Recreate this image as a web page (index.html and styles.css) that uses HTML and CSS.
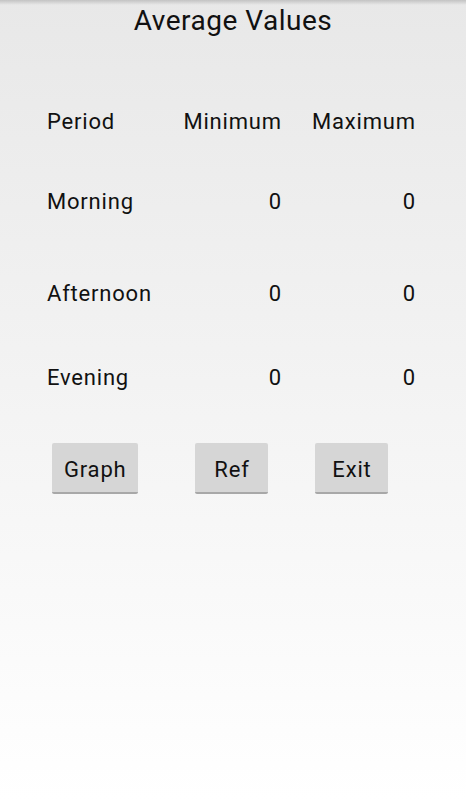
FILE: index.html
```html
<!DOCTYPE html>
<html lang="en">

<head>
    <meta charset="UTF-8">
    <meta name="viewport" content="width=device-width, initial-scale=1.0">
    <title>Average Values</title>

    <link rel="stylesheet" href="styles.css">
</head>

<body>

    <header class="titulo">
        <h1>Average Values</h1>
    </header>

    <section id="medias">
        <div class="linha cabecalho">
            <span>Period</span>
            <span class="num">Minimum</span>
            <span class="num">Maximum</span>
        </div>
        <div class="linha manha">
            <span>Morning</span>
            <span class="num">0</span>
            <span class="num">0</span>
        </div>
        <div class="linha tarde">
            <span>Afternoon</span>
            <span class="num">0</span>
            <span class="num">0</span>
        </div>
        <div class="linha noite">
            <span>Evening</span>
            <span class="num">0</span>
            <span class="num">0</span>
        </div>
    </section>

    <nav class="botoes">
        <button class="btn btn-graph">Graph</button>
        <button class="btn btn-ref">Ref</button>
        <button class="btn btn-exit">Exit</button>
    </nav>

</body>

</html>
```

FILE: styles.css
```css
* {
    padding: 0;
    margin: 0;
    box-sizing: border-box;
}

body {
    min-height: 800px;
    font-family: Roboto, "Liberation Sans", sans-serif;
    color: #111;
    background: linear-gradient(#e8e8e8, #ffffff 800px);
    position: relative;
}

/* sombra da barra de cima */
body::before {
    content: '';
    position: absolute;
    top: 0;
    left: 0;
    right: 0;
    height: 5px;
    background: linear-gradient(rgba(0, 0, 0, 0.16), rgba(0, 0, 0, 0));
}

.titulo {
    padding-top: 4px;
    text-align: center;
}

.titulo h1 {
    font-size: 28px;
    font-weight: normal;
    line-height: 33px;
    letter-spacing: 0.5px;
}

#medias {
    display: flex;
    flex-direction: column;
    padding-left: 47px;
    margin-top: 72px;
}

.linha {
    display: grid;
    grid-template-columns: 135px 99px 134px;
    font-size: 22px;
    line-height: 26px;
    letter-spacing: 0.8px;
}

.linha .num {
    text-align: right;
    margin-right: -0.8px;
}

.manha {
    margin-top: 54px;
}

.tarde {
    margin-top: 66px;
}

.noite {
    margin-top: 58px;
}

.botoes {
    display: flex;
    padding-left: 52px;
    margin-top: 52px;
}

.btn {
    height: 51px;
    min-width: 73px;
    padding: 3px 12px 0;
    font-family: Roboto, "Liberation Sans", sans-serif;
    font-size: 22px;
    letter-spacing: 0.8px;
    color: #111;
    background-color: #d6d6d6;
    border: none;
    border-bottom: 2px solid #a8a8a8;
    border-radius: 2px;
}

.btn-ref {
    margin-left: 57px;
}

.btn-exit {
    margin-left: 47px;
}
```
